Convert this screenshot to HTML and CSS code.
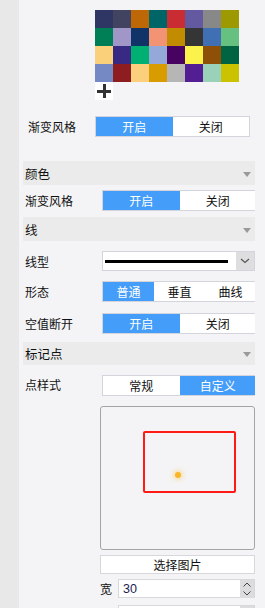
FILE: index.html
```html
<!DOCTYPE html>
<html lang="zh">
<head>
<meta charset="utf-8">
<link rel="stylesheet" href="styles.css">
</head>
<body>
<div class="page">
  <div class="side"></div>
  <div class="main">
    <div class="palette">
      <div class="grid">
        <span style="background:#2f3664"></span><span style="background:#414360"></span><span style="background:#bd6706"></span><span style="background:#006567"></span><span style="background:#c92d33"></span><span style="background:#6259a0"></span><span style="background:#888888"></span><span style="background:#9c9a00"></span>
        <span style="background:#007f56"></span><span style="background:#a096c8"></span><span style="background:#103368"></span><span style="background:#f29474"></span><span style="background:#c18c00"></span><span style="background:#353535"></span><span style="background:#416fb4"></span><span style="background:#66c080"></span>
        <span style="background:#fbd07a"></span><span style="background:#382983"></span><span style="background:#00b073"></span><span style="background:#94a9d8"></span><span style="background:#480360"></span><span style="background:#fbf34c"></span><span style="background:#8e5007"></span><span style="background:#006442"></span>
        <span style="background:#7589c4"></span><span style="background:#8d1d21"></span><span style="background:#fbcf7b"></span><span style="background:#d89c00"></span><span style="background:#b6b6b6"></span><span style="background:#521e91"></span><span style="background:#9ad2b9"></span><span style="background:#cbc300"></span>
      </div>
      <div class="plus"><span class="ph"></span><span class="pv"></span></div>
    </div>
    <div class="toprow">
      <span class="toplabel">渐变风格</span>
      <div class="seg seg2"><span class="on">开启</span><span>关闭</span></div>
    </div>

    <div class="section">
      <div class="head"><span>颜色</span><i class="tri"></i></div>
      <div class="row r1">
        <span class="label">渐变风格</span>
        <div class="seg seg2 clip"><span class="on">开启</span><span>关闭</span></div>
      </div>

      <div class="head h2"><span>线</span><i class="tri"></i></div>
      <div class="row r2">
        <span class="label">线型</span>
        <div class="select"><div class="line"></div><div class="btn"><svg width="10" height="6" viewBox="0 0 10 6"><path d="M1 1 L5 4.5 L9 1" fill="none" stroke="#555" stroke-width="1.2"/></svg></div></div>
      </div>
      <div class="row r3">
        <span class="label">形态</span>
        <div class="seg seg3 clip"><span class="on">普通</span><span>垂直</span><span>曲线</span></div>
      </div>
      <div class="row r4">
        <span class="label">空值断开</span>
        <div class="seg seg2 clip"><span class="on">开启</span><span>关闭</span></div>
      </div>

      <div class="head h3"><span>标记点</span><i class="tri"></i></div>
      <div class="row r5">
        <span class="label">点样式</span>
        <div class="seg seg2 clip"><span>常规</span><span class="on">自定义</span></div>
      </div>
      <div class="preview">
        <div class="frame"><div class="dot"></div></div>
      </div>
      <div class="choose">选择图片</div>
      <div class="numrow">
        <span class="nlabel">宽</span>
        <div class="num"><span class="val">30</span><div class="spin"><svg width="10" height="16" viewBox="0 0 10 16"><path d="M1.5 5.5 L5 2 L8.5 5.5" fill="none" stroke="#444" stroke-width="1"/><path d="M1.5 10.5 L5 14 L8.5 10.5" fill="none" stroke="#444" stroke-width="1"/></svg></div></div>
      </div>
      <div class="numrow nr2">
        <span class="nlabel"></span>
        <div class="num"><span class="val"></span><div class="spin"></div></div>
      </div>
    </div>
  </div>
</div>
</body>
</html>
```

FILE: styles.css
```css
* { box-sizing: border-box; }
html, body { margin: 0; padding: 0; }
body {
  background: #f4f4f6;
  font-family: "Noto Sans CJK SC", "Noto Sans", sans-serif;
  font-size: 12px;
  color: #111;
  width: 265px;
  height: 608px;
  overflow: hidden;
}
.page { display: flex; height: 608px; }
.side { width: 19px; background: #e8e8e8; flex: none; }
.main { width: 236px; flex: none; overflow: hidden; }

.palette { padding: 10px 0 0 76px; }
.grid { display: grid; grid-template-columns: repeat(8, 18px); grid-auto-rows: 18px; width: 144px; }
.grid span { display: block; }
.plus { width: 18px; height: 18px; background: #fff; position: relative; }
.plus .ph { position: absolute; left: 2px; top: 8px; width: 14px; height: 3px; background: #333; }
.plus .pv { position: absolute; left: 8px; top: 2px; width: 3px; height: 14px; background: #333; }

.toprow { display: flex; align-items: center; margin-top: 16px; height: 21px; }
.toplabel { width: 76px; padding-left: 9px; }

.seg { display: flex; height: 21px; border: 1px solid #d4d4dc; background: #fff; flex: none; }
.seg span { display: flex; align-items: center; justify-content: center; flex: 1; }
.seg span.on { background: #449df8; color: #fff; }
.seg2 { width: 155px; }
.seg3 { width: 155px; }

.section { margin-left: 4px; width: 232px; overflow: hidden; }
.head { height: 24px; background: #ebebeb; display: flex; align-items: center; justify-content: space-between; padding: 0 4px 0 2px; font-size: 12.5px; }
.section > .head:first-child { margin-top: 24px; }
.tri { width: 0; height: 0; border-left: 4px solid transparent; border-right: 4px solid transparent; border-top: 5px solid #9a9a9a; margin-top: 2px; }

.row { display: flex; align-items: center; }
.label { width: 79px; flex: none; padding-left: 2px; }
.r1 { margin-top: 5px; height: 21px; }
.h2 { margin-top: 6px; }
.r2 { margin-top: 10px; height: 20px; }
.r3 { margin-top: 10px; height: 21px; }
.r4 { margin-top: 11px; height: 21px; }
.h3 { margin-top: 8px; height: 23px; }
.r5 { margin-top: 10px; height: 21px; align-items: flex-start; }
.r5 .label { padding-top: 1px; }

.select { width: 153px; height: 20px; border: 1px solid #d4d4dc; background: #fff; display: flex; align-items: center; flex: none; }
.line { flex: 1; height: 3px; background: #000; margin: 0 8px 0 2px; }
.btn { width: 18px; height: 18px; background: #dedee0; display: flex; align-items: center; justify-content: center; }

.preview { margin: 10px 0 0 77px; width: 155px; height: 144px; border: 1px solid #a4a4a8; border-radius: 3px; background: #f4f4f6; padding: 24px 0 0 42px; }
.frame { width: 93px; height: 62px; border: 2px solid #ff1a16; border-radius: 2px; padding: 39px 0 0 30px; }
.dot { width: 6px; height: 6px; border-radius: 50%; background: #fbb526; box-shadow: 0 0 4px 2px rgba(251, 200, 80, 0.45); }

.choose { margin: 5px 0 0 77px; width: 155px; height: 19px; background: #fff; border: 1px solid #d8d8dc; display: flex; align-items: center; justify-content: center; }

.numrow { display: flex; align-items: center; margin: 5px 0 0 77px; height: 19px; }
.nlabel { width: 18px; flex: none; }
.num { width: 137px; height: 19px; border: 1px solid #d8d8dc; background: #fff; display: flex; align-items: center; }
.val { flex: 1; padding-left: 4px; color: #1c1c50; font-family: "Liberation Sans", sans-serif; font-size: 12.5px; }
.spin { width: 14px; height: 18px; background: #dcdcde; display: flex; align-items: center; justify-content: center; }
.nr2 { margin-top: 7px; }
```
